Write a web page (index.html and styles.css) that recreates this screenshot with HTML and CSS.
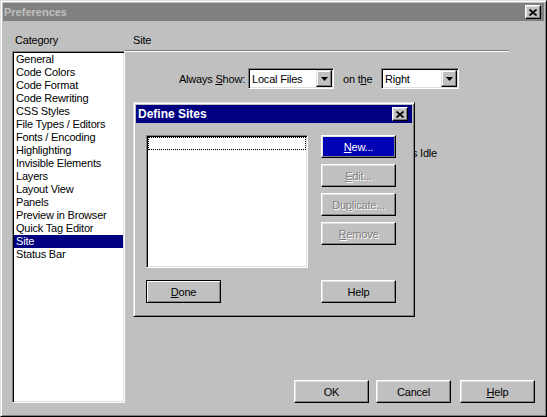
FILE: index.html
```html
<!DOCTYPE html>
<html>
<head>
<meta charset="utf-8">
<title>Preferences</title>
<link rel="stylesheet" href="styles.css">
</head>
<body>
<div class="window">
  <div class="titlebar inactive">
    <span class="title">Preferences</span>
    <span class="close-btn"><svg width="8" height="7" viewBox="0 0 8 7"><path d="M0.5 0.5 L7.5 6.5 M7.5 0.5 L0.5 6.5" stroke="#000" stroke-width="1.7" fill="none"/></svg></span>
  </div>
  <div class="body">
    <div class="cat-col">
      <div class="label">Category</div>
      <ul class="sunken cat-list">
        <li>General</li>
        <li>Code Colors</li>
        <li>Code Format</li>
        <li>Code Rewriting</li>
        <li>CSS Styles</li>
        <li>File Types / Editors</li>
        <li>Fonts / Encoding</li>
        <li>Highlighting</li>
        <li>Invisible Elements</li>
        <li>Layers</li>
        <li>Layout View</li>
        <li>Panels</li>
        <li>Preview in Browser</li>
        <li>Quick Tag Editor</li>
        <li class="selected">Site</li>
        <li>Status Bar</li>
      </ul>
    </div>
    <div class="main-col">
      <div class="section-head">Site</div>
      <div class="separator"></div>
      <div class="always-row">
        <span class="always-label">Always <u>S</u>how:</span>
        <div class="sunken select select-files">
          <span class="select-value">Local Files</span>
          <span class="drop-btn"><svg width="7" height="4" viewBox="0 0 7 4"><path d="M0 0 H7 L3.5 4 Z" fill="#000"/></svg></span>
        </div>
        <span class="onthe-label">on t<u>h</u>e</span>
        <div class="sunken select select-side">
          <span class="select-value">Right</span>
          <span class="drop-btn"><svg width="7" height="4" viewBox="0 0 7 4"><path d="M0 0 H7 L3.5 4 Z" fill="#000"/></svg></span>
        </div>
      </div>
      <div class="idle-row"><span class="idle-text">Minutes Idle</span></div>
      <div class="bottom-buttons">
        <span class="btn btn-ok">OK</span>
        <span class="btn btn-cancel">Cancel</span>
        <span class="btn"><u>H</u>elp</span>
      </div>
    </div>
  </div>

  <div class="dialog">
    <div class="titlebar active">
      <span class="title dlg-title">Define Sites</span>
      <span class="close-btn"><svg width="8" height="7" viewBox="0 0 8 7"><path d="M0.5 0.5 L7.5 6.5 M7.5 0.5 L0.5 6.5" stroke="#000" stroke-width="1.7" fill="none"/></svg></span>
    </div>
    <div class="dialog-body">
      <div class="dlg-top">
        <div class="sunken site-list">
          <div class="focus-item"></div>
        </div>
        <div class="dlg-buttons">
          <span class="btn btn-focused"><u>N</u>ew...</span>
          <span class="btn disabled"><u>E</u>dit...</span>
          <span class="btn disabled">Du<u>p</u>licate...</span>
          <span class="btn disabled"><u>R</u>emove</span>
        </div>
      </div>
      <div class="dlg-bottom">
        <span class="btn btn-default"><u>D</u>one</span>
        <span class="btn">Help</span>
      </div>
    </div>
  </div>
</div>
</body>
</html>
```

FILE: styles.css
```css
body {
  margin: 0;
  background: #c0c0c0;
  font-family: "Liberation Sans", Arial, sans-serif;
  font-size: 11px;
  letter-spacing: -0.2px;
  color: #000;
}

.window {
  position: relative;
  width: 547px;
  height: 417px;
  box-sizing: border-box;
  background: #c0c0c0;
  border: 1px solid;
  border-color: #dfdfdf #000 #000 #dfdfdf;
  box-shadow: inset 1px 1px #fff, inset -1px -1px #808080;
  padding: 2px;
  display: flex;
  flex-direction: column;
}

.titlebar {
  height: 18px;
  flex: none;
  display: flex;
  align-items: center;
  justify-content: space-between;
  padding: 0 3px 0 1px;
}

.titlebar.inactive {
  background: #808080;
  color: #c0c0c0;
}

.titlebar.active {
  background: #000080;
  color: #fff;
  padding: 0 4px 0 2px;
}

.title {
  font-weight: bold;
  font-size: 11px;
  letter-spacing: 0;
}

.dlg-title {
  font-size: 12px;
}

.close-btn {
  width: 16px;
  height: 14px;
  box-sizing: border-box;
  background: #c0c0c0;
  border: 1px solid;
  border-color: #fff #000 #000 #fff;
  box-shadow: inset -1px -1px #808080, inset 1px 1px #dfdfdf;
  display: flex;
  align-items: center;
  justify-content: center;
}

.body {
  flex: 1;
  display: flex;
  padding: 13px 0 11px 9px;
}

.cat-col {
  width: 113px;
  display: flex;
  flex-direction: column;
}

.label {
  height: 13px;
  line-height: 13px;
  padding-left: 3px;
}

.sunken {
  background: #fff;
  box-sizing: border-box;
  border: 1px solid;
  border-color: #808080 #fff #fff #808080;
  box-shadow: inset 1px 1px #000, inset -1px -1px #dfdfdf;
  padding: 1px;
}

.cat-list {
  flex: 1;
  margin: 4px 0 0;
  list-style: none;
}

.cat-list li {
  height: 13px;
  line-height: 13px;
  padding-left: 2px;
  white-space: nowrap;
}

.cat-list li.selected {
  background: #000080;
  color: #fff;
}

.main-col {
  flex: 1;
  display: flex;
  flex-direction: column;
}

.section-head {
  height: 13px;
  line-height: 13px;
  padding-left: 8px;
}

.separator {
  margin-top: 3px;
  width: 384px;
  border-top: 1px solid #808080;
  border-bottom: 1px solid #fff;
}

.always-row {
  margin-top: 16px;
  display: flex;
  align-items: center;
  padding-left: 50px;
}

.always-label {
  width: 70px;
  text-align: right;
  margin-right: 3px;
  white-space: nowrap;
}

.onthe-label {
  width: 38px;
  margin-left: 9px;
  white-space: nowrap;
}

.select {
  height: 21px;
  display: flex;
  align-items: center;
}

.select-files { width: 86px; }
.select-side { width: 78px; }

.select-value {
  padding-left: 2px;
  flex: 1;
  white-space: nowrap;
}

.drop-btn {
  width: 16px;
  height: 17px;
  box-sizing: border-box;
  background: #c0c0c0;
  border: 1px solid;
  border-color: #dfdfdf #000 #000 #dfdfdf;
  box-shadow: inset -1px -1px #808080, inset 1px 1px #fff;
  display: flex;
  align-items: center;
  justify-content: center;
}

.idle-row {
  margin-top: 58px;
  width: 312px;
  height: 13px;
  line-height: 13px;
  display: flex;
  justify-content: flex-end;
  white-space: nowrap;
}

.bottom-buttons {
  margin-top: auto;
  display: flex;
  justify-content: flex-end;
  padding-right: 9px;
}

.btn {
  width: 75px;
  height: 23px;
  box-sizing: border-box;
  background: #c0c0c0;
  border: 1px solid;
  border-color: #fff #000 #000 #fff;
  box-shadow: inset -1px -1px #808080, inset 1px 1px #dfdfdf;
  display: flex;
  align-items: center;
  justify-content: center;
  white-space: nowrap;
}

.btn-ok { margin-right: 7px; }
.btn-cancel { margin-right: 9px; }

.btn.disabled {
  color: #808080;
  text-shadow: 1px 1px #fff;
}

.btn.btn-focused {
  background: #0000b4;
  color: #fff;
}

.btn.btn-default {
  border-color: #000;
  box-shadow: inset 1px 1px #fff, inset -1px -1px #808080;
}

.dialog {
  position: absolute;
  left: 132px;
  top: 101px;
  width: 282px;
  height: 215px;
  box-sizing: border-box;
  background: #c0c0c0;
  border: 1px solid;
  border-color: #dfdfdf #000 #000 #dfdfdf;
  box-shadow: inset 1px 1px #fff, inset -1px -1px #808080;
  padding: 2px;
  display: flex;
  flex-direction: column;
}

.dialog-body {
  padding: 12px 0 0 10px;
  display: flex;
  flex-direction: column;
}

.dlg-top {
  display: flex;
  gap: 13px;
}

.site-list {
  width: 162px;
  height: 133px;
}

.focus-item {
  height: 13px;
  box-sizing: border-box;
  border: 1px dotted #000;
}

.dlg-buttons {
  display: flex;
  flex-direction: column;
  gap: 6px;
}

.dlg-bottom {
  margin-top: 12px;
  width: 250px;
  display: flex;
  justify-content: space-between;
}
```
